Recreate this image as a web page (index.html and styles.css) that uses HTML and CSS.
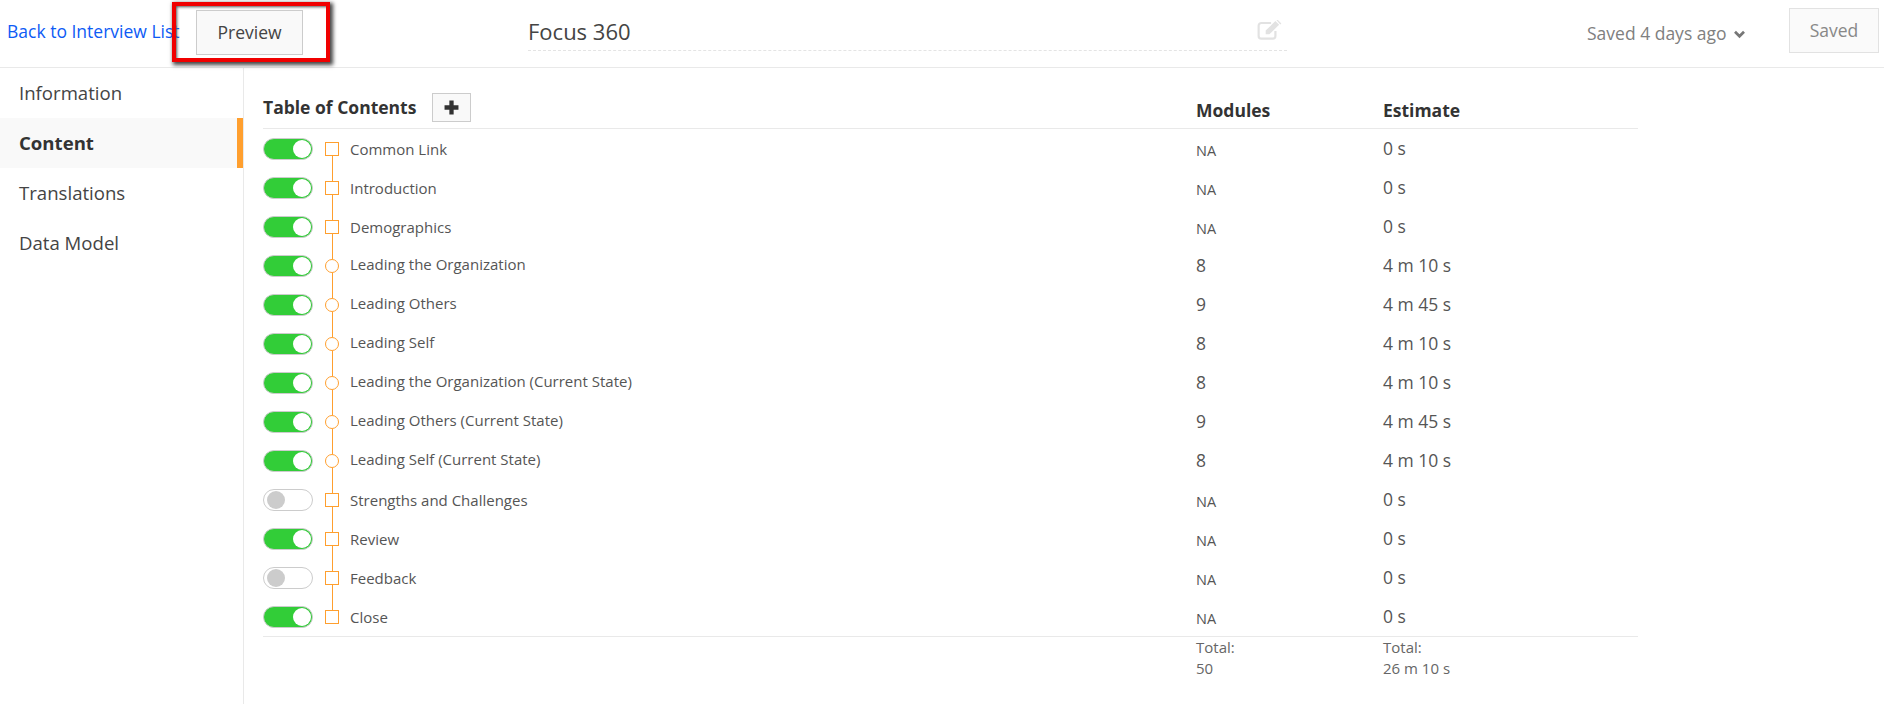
FILE: index.html
```html
<!DOCTYPE html>
<html lang="en">
<head>
    <meta charset="UTF-8">
    <title>Focus 360</title>
    <link rel="stylesheet" href="styles.css">
</head>
<body>
    <header class="topbar">
        <a class="back-link" href="#">Back to Interview List</a>
        <button class="btn preview-btn">Preview</button>
        <div class="title-box">
            <span class="title">Focus 360</span>
            <svg class="edit-icon" viewBox="0 0 24 18" width="26" height="20">
                <path d="M17 10v4.500a2.500 2.500 0 0 1-2.500 2.500H4A2.500 2.500 0 0 1 1.500 14.500V5A2.500 2.500 0 0 1 4 2.500h9" fill="none" stroke="#e2e2e2" stroke-width="2"/>
                <path d="M8 9.500 17 .8l3.400 3.400-9 8.800H8z" fill="#e2e2e2"/>
                <path d="M18 0l1-.5 3.500 3.500-1 1z" fill="#e2e2e2"/>
            </svg>
        </div>
        <div class="saved-info">
            Saved 4 days ago
            <svg class="chevron" viewBox="0 0 14 10" width="13" height="9">
                <path d="M2 2l5 5 5-5" fill="none" stroke="#777" stroke-width="3"/>
            </svg>
        </div>
        <button class="btn saved-btn">Saved</button>
        <div class="highlight"></div>
    </header>

    <div class="main">
        <nav class="sidebar">
            <a class="nav-item" href="#">Information</a>
            <a class="nav-item active" href="#">Content</a>
            <a class="nav-item" href="#">Translations</a>
            <a class="nav-item" href="#">Data Model</a>
        </nav>

        <section class="content">
            <div class="toc-head">
                <div class="toc-title">
                    <span class="toc-label">Table of Contents</span>
                    <button class="btn add-btn">
                        <svg viewBox="0 0 14 14" width="15" height="15"><path d="M5 0.500h4v4.500h4.500v4H9v4.500H5V9H0.500V5H5z" fill="#333"/></svg>
                    </button>
                </div>
                <div class="toc-col">Modules</div>
                <div class="toc-col">Estimate</div>
            </div>

            <div class="rows">
                <div class="row"><span class="toggle on"></span><span class="node square"></span><span class="name">Common Link</span><span class="na">NA</span><span class="val">0 s</span></div>
                <div class="row"><span class="toggle on"></span><span class="node square"></span><span class="name">Introduction</span><span class="na">NA</span><span class="val">0 s</span></div>
                <div class="row"><span class="toggle on"></span><span class="node square"></span><span class="name">Demographics</span><span class="na">NA</span><span class="val">0 s</span></div>
                <div class="row"><span class="toggle on"></span><span class="node circle"></span><span class="name">Leading the Organization</span><span class="val">8</span><span class="val">4 m 10 s</span></div>
                <div class="row"><span class="toggle on"></span><span class="node circle"></span><span class="name">Leading Others</span><span class="val">9</span><span class="val">4 m 45 s</span></div>
                <div class="row"><span class="toggle on"></span><span class="node circle"></span><span class="name">Leading Self</span><span class="val">8</span><span class="val">4 m 10 s</span></div>
                <div class="row"><span class="toggle on"></span><span class="node circle"></span><span class="name">Leading the Organization (Current State)</span><span class="val">8</span><span class="val">4 m 10 s</span></div>
                <div class="row"><span class="toggle on"></span><span class="node circle"></span><span class="name">Leading Others (Current State)</span><span class="val">9</span><span class="val">4 m 45 s</span></div>
                <div class="row"><span class="toggle on"></span><span class="node circle"></span><span class="name">Leading Self (Current State)</span><span class="val">8</span><span class="val">4 m 10 s</span></div>
                <div class="row"><span class="toggle"></span><span class="node square"></span><span class="name">Strengths and Challenges</span><span class="na">NA</span><span class="val">0 s</span></div>
                <div class="row"><span class="toggle on"></span><span class="node square"></span><span class="name">Review</span><span class="na">NA</span><span class="val">0 s</span></div>
                <div class="row"><span class="toggle"></span><span class="node square"></span><span class="name">Feedback</span><span class="na">NA</span><span class="val">0 s</span></div>
                <div class="row"><span class="toggle on"></span><span class="node square last"></span><span class="name">Close</span><span class="na">NA</span><span class="val">0 s</span></div>
            </div>

            <div class="totals">
                <div></div>
                <div>Total:<br>50</div>
                <div>Total:<br>26 m 10 s</div>
            </div>
        </section>
    </div>
</body>
</html>
```

FILE: styles.css
```css
* {
    box-sizing: border-box;
}
html, body {
    height: 100%;
}
body {
    margin: 0;
    font-family: "Open Sans", sans-serif;
    color: #555;
    background: white;
    overflow: hidden;
}
a {
    text-decoration: none;
}
.btn {
    font-family: inherit;
    background: #f9f9f9;
    border: 1px solid #ccc;
    padding: 0;
}

/* top bar */
.topbar {
    position: relative;
    display: flex;
    align-items: flex-start;
    height: 68px;
    border-bottom: 1px solid #e9e9e9;
}
.back-link {
    width: 196px;
    padding: 20px 0 0 7px;
    font-size: 17.5px;
    line-height: 22px;
    color: #0d5bf5;
    white-space: nowrap;
}
.preview-btn {
    width: 107px;
    height: 45px;
    margin-top: 10px;
    padding-bottom: 2px;
    font-size: 17.5px;
    line-height: 22px;
    color: #444;
}
.title-box {
    display: flex;
    justify-content: space-between;
    width: 759px;
    height: 51px;
    margin-left: 225px;
    padding: 16px 4px 0 0;
    border-bottom: 1px dashed #e4e4e4;
}
.title {
    font-size: 22px;
    line-height: 30px;
    color: #444;
}
.edit-icon {
    margin-top: 4px;
}
.saved-info {
    display: flex;
    align-items: center;
    gap: 6px;
    width: 202px;
    margin-left: 300px;
    padding-top: 22px;
    font-size: 17.5px;
    line-height: 22px;
    color: #808080;
    white-space: nowrap;
}
.chevron {
    margin-top: 3px;
}
.saved-btn {
    width: 90px;
    height: 45px;
    margin-top: 8px;
    padding-bottom: 2px;
    font-size: 17.5px;
    color: #888;
    background: #fafafa;
    border: 1px solid #e2e2e2;
}
.highlight {
    position: absolute;
    left: 172px;
    top: 2px;
    width: 158px;
    height: 60px;
    border: 4px solid #f00000;
    box-shadow: 2px 2px 4px 1px #444, inset 2px 2px 3px -1px #555;
}

/* page body */
.main {
    display: flex;
    height: 636px;
}
.sidebar {
    flex: none;
    width: 244px;
    border-right: 1px solid #e9e9e9;
}
.nav-item {
    display: block;
    height: 50px;
    padding-left: 19px;
    font-size: 18.6px;
    line-height: 50px;
    color: #444;
}
.nav-item.active {
    font-weight: 700;
    color: #333;
    background: #f9f9f9;
    border-right: 6px solid #ff9f2e;
}
.content {
    width: 1375px;
    margin-left: 19px;
}
.toc-head, .totals {
    display: grid;
    grid-template-columns: 933px 187px 1fr;
}
.toc-head {
    align-items: center;
    height: 61px;
    padding-top: 22px;
    border-bottom: 1px solid #e9e9e9;
    font-size: 17.5px;
    font-weight: 700;
    color: #333;
}
.toc-title {
    display: flex;
    align-items: center;
    gap: 16px;
}
.toc-label {
    margin-bottom: 4px;
}
.toc-col {
    margin-top: 2px;
}
.add-btn {
    display: flex;
    align-items: center;
    justify-content: center;
    width: 39px;
    height: 29px;
    margin-top: -3px;
}

/* rows */
.rows {
    border-bottom: 1px solid #e9e9e9;
}
.row {
    display: grid;
    grid-template-columns: 50px 12px 14px 11px 846px 187px 1fr;
    align-items: center;
    height: 39px;
}
.row > :first-child {
    grid-column: 1;
}
.row .node {
    grid-column: 3;
}
.row .name {
    grid-column: 5;
}
.toggle {
    position: relative;
    width: 50px;
    height: 22px;
    border: 1px solid #ccc;
    border-radius: 11px;
    background: white;
}
.toggle::after {
    content: "";
    position: absolute;
    left: 3px;
    top: 1px;
    width: 18px;
    height: 18px;
    border-radius: 50%;
    background: #ccc;
}
.toggle.on {
    background: #32cd38;
}
.toggle.on::after {
    left: auto;
    right: 1px;
    background: white;
}
.node {
    position: relative;
    width: 14px;
    height: 14px;
    border: 1px solid #ff9f2e;
    background: white;
}
.node.circle {
    border-radius: 50%;
}
.node::after {
    content: "";
    position: absolute;
    left: 6px;
    top: 13px;
    width: 1px;
    height: 25px;
    background: #ff9f2e;
}
.node.last::after {
    display: none;
}
.name {
    font-size: 15px;
    color: #555;
    white-space: nowrap;
}
.node.circle + .name {
    margin-top: -4px;
}
.na {
    font-size: 14.5px;
    margin-top: 4px;
}
.val {
    font-size: 17.5px;
    margin-top: -2px;
}
.totals {
    font-size: 15px;
    line-height: 21px;
    color: #666;
}
```
